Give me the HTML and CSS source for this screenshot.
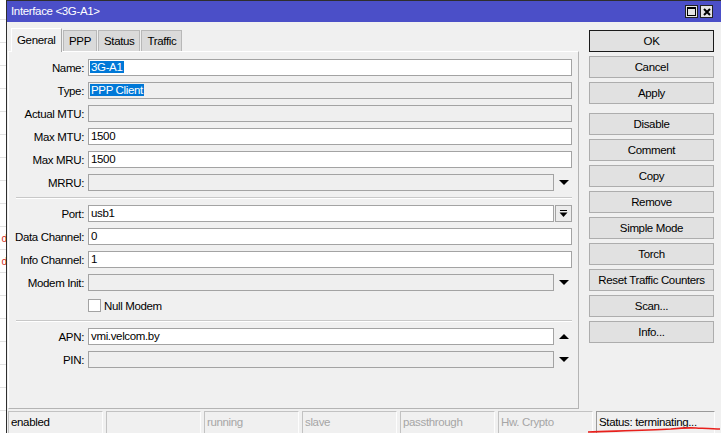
FILE: index.html
```html
<!DOCTYPE html>
<html>
<head>
<meta charset="utf-8">
<link rel="stylesheet" href="styles.css">
</head>
<body>
<div class="screen">
  <div class="behind">
    <div class="brow"></div><div class="brow"></div><div class="brow"></div><div class="brow"></div>
    <div class="brow"></div><div class="brow"></div><div class="brow"></div><div class="brow"></div>
    <div class="brow"></div><div class="brow"></div>
    <div class="brow red"><span>ol</span></div>
    <div class="brow red"><span>ol</span></div>
    <div class="brow"></div><div class="brow"></div><div class="brow"></div><div class="brow"></div>
    <div class="brow"></div><div class="brow"></div><div class="brow"></div><div class="brow"></div>
  </div>
  <div class="window">
    <div class="titlebar">
      <span class="title">Interface &lt;3G-A1&gt;</span>
      <div class="tb-btns">
        <span class="tb-btn"><span class="max-sq"></span></span>
        <span class="tb-btn">
          <svg width="10" height="10" viewBox="0 0 10 10"><path d="M2 2 L8 8 M8 2 L2 8" stroke="#000" stroke-width="2"/></svg>
        </span>
      </div>
    </div>
    <div class="body">
      <div class="main">
        <div class="tabs">
          <span class="tab active">General</span>
          <span class="tab">PPP</span>
          <span class="tab">Status</span>
          <span class="tab">Traffic</span>
        </div>
        <div class="panel">
          <div class="row"><label>Name:</label><div class="field"><span class="sel">3G-A1</span></div></div>
          <div class="row"><label>Type:</label><div class="field ro"><span class="sel">PPP Client</span></div></div>
          <div class="row"><label>Actual MTU:</label><div class="field ro"></div></div>
          <div class="row"><label>Max MTU:</label><div class="field">1500</div></div>
          <div class="row"><label>Max MRU:</label><div class="field">1500</div></div>
          <div class="row"><label>MRRU:</label><div class="field ro"></div><span class="arrow"><span class="tri-down"></span></span></div>
          <div class="sep"></div>
          <div class="row"><label>Port:</label><div class="field">usb1</div><span class="dd-btn">
            <svg width="9" height="9" viewBox="0 0 9 9"><rect x="1" y="1" width="7" height="1" fill="#000"/><path d="M0.5 3.5 H8.5 L4.5 8 Z" fill="#000"/></svg></span></div>
          <div class="row"><label>Data Channel:</label><div class="field">0</div></div>
          <div class="row"><label>Info Channel:</label><div class="field">1</div></div>
          <div class="row"><label>Modem Init:</label><div class="field ro"></div><span class="arrow"><span class="tri-down"></span></span></div>
          <div class="row check"><span class="checkbox"></span><span>Null Modem</span></div>
          <div class="sep"></div>
          <div class="row"><label>APN:</label><div class="field">vmi.velcom.by</div><span class="arrow"><span class="tri-up"></span></span></div>
          <div class="row"><label>PIN:</label><div class="field ro"></div><span class="arrow"><span class="tri-down"></span></span></div>
        </div>
      </div>
      <div class="actions">
        <button class="btn default">OK</button>
        <button class="btn">Cancel</button>
        <button class="btn">Apply</button>
        <button class="btn gap">Disable</button>
        <button class="btn">Comment</button>
        <button class="btn">Copy</button>
        <button class="btn">Remove</button>
        <button class="btn">Simple Mode</button>
        <button class="btn">Torch</button>
        <button class="btn">Reset Traffic Counters</button>
        <button class="btn">Scan...</button>
        <button class="btn">Info...</button>
      </div>
    </div>
    <div class="statusbar">
      <span class="seg">enabled</span>
      <span class="seg"></span>
      <span class="seg dim">running</span>
      <span class="seg dim">slave</span>
      <span class="seg dim">passthrough</span>
      <span class="seg dim">Hw. Crypto</span>
      <span class="seg last">Status: terminating...</span>
    </div>
  </div>
  <svg class="annotation" width="140" height="12" viewBox="0 0 140 12">
    <path d="M2 11 C30 10 60 9.5 85 8 C95 7 100 6.5 110 7 C120 7.5 128 8 134 8" stroke="#e8201c" stroke-width="1.6" fill="none"/>
  </svg>
</div>
</body>
</html>
```

FILE: styles.css
```css
* { box-sizing: border-box; }
html, body { margin: 0; padding: 0; }
body {
  width: 721px;
  height: 433px;
  overflow: hidden;
  background: #fff;
  font-family: "Liberation Sans", Arial, sans-serif;
  font-size: 11.5px;
  letter-spacing: -0.35px;
  color: #000;
}
.screen {
  position: relative;
  display: flex;
  width: 721px;
  height: 433px;
}
.behind {
  width: 6px;
  flex: none;
  overflow: hidden;
  margin-top: -3px;
}
.brow {
  height: 23px;
  border-bottom: 1px solid #e2e2e2;
  display: flex;
  justify-content: flex-end;
  align-items: center;
  white-space: nowrap;
  color: #d22a1e;
  font-size: 10px;
  letter-spacing: -1.6px;
}
.window {
  flex: 1;
  display: flex;
  flex-direction: column;
  border-left: 1px solid #2e2e2e;
  border-top: 1px solid #2e2e2e;
  background: #f0f0f0;
}
.titlebar {
  height: 21px;
  background: #4b4fc8;
  display: flex;
  align-items: center;
  justify-content: space-between;
  padding-left: 4px;
  padding-right: 8px;
  color: #fff;
  flex: none;
}
.title { line-height: 21px; }
.tb-btns { display: flex; gap: 2px; }
.tb-btn {
  width: 13px;
  height: 13px;
  background: #e4e4e4;
  border: 1px solid #222;
  display: flex;
  align-items: center;
  justify-content: center;
}
.max-sq {
  width: 9px;
  height: 9px;
  border: 1px solid #000;
  border-top-width: 2px;
}
.body {
  flex: 1;
  display: flex;
  min-height: 0;
}
.main {
  width: 572px;
  flex: none;
  display: flex;
  flex-direction: column;
}
.tabs {
  display: flex;
  align-items: flex-end;
  padding-left: 4px;
  margin-top: 6px;
  height: 23px;
}
.tab {
  height: 21px;
  line-height: 20px;
  padding: 0 5px;
  background: #dadada;
  border: 1px solid #b8b8b8;
  border-bottom: none;
  margin-right: 1px;
}
.tab.active {
  height: 24px;
  margin-bottom: -1px;
  background: #f0f0f0;
  border-color: #ffffff #a8a8a8 #f0f0f0 #ffffff;
  padding: 0 5px;
  line-height: 22px;
  position: relative;
  z-index: 1;
  width: 51px;
}
.panel {
  margin-left: 1px;
  width: 571px;
  height: 358px;
  border: 1px solid #b4b4b4;
  border-top-color: #ffffff;
  border-left-color: #ffffff;
  padding: 7px 6px 0 0;
  display: flex;
  flex-direction: column;
  gap: 6px;
}
.row {
  display: flex;
  align-items: center;
  height: 17px;
  flex: none;
}
.row label {
  width: 75px;
  flex: none;
  text-align: right;
  margin-right: 4px;
  white-space: nowrap;
}
.field {
  flex: 1;
  height: 17px;
  background: #fff;
  border: 1px solid #a3a3a3;
  padding-left: 2px;
  line-height: 15px;
  white-space: nowrap;
  overflow: hidden;
}
.field.ro { background: #efefef; }
.sel {
  background: #0078d7;
  color: #fff;
  padding: 0 1px;
  margin-left: -1px;
}
.arrow {
  width: 18px;
  flex: none;
  height: 17px;
  display: flex;
  align-items: center;
  justify-content: center;
  padding-left: 2px;
}
.tri-down, .tri-up {
  width: 0;
  height: 0;
  border-left: 5px solid transparent;
  border-right: 5px solid transparent;
}
.tri-down { border-top: 5px solid #000; }
.tri-up { border-bottom: 5px solid #000; }
.dd-btn {
  width: 17px;
  height: 17px;
  flex: none;
  margin-left: 1px;
  border: 1px solid #a3a3a3;
  background: #ececec;
  display: flex;
  align-items: center;
  justify-content: center;
}
.sep {
  height: 2px;
  margin-left: 7px;
  border-top: 1px solid #c8c8c8;
  border-bottom: 1px solid #ffffff;
  flex: none;
}
.row.check { padding-left: 79px; }
.checkbox {
  width: 13px;
  height: 13px;
  background: #fff;
  border: 1px solid #a3a3a3;
  margin-right: 3px;
  flex: none;
}
.actions {
  margin-left: 10px;
  width: 125px;
  padding-top: 8px;
  display: flex;
  flex-direction: column;
  gap: 4px;
}
.btn {
  height: 22px;
  flex: none;
  font: inherit;
  letter-spacing: inherit;
  color: #000;
  background: #e1e1e1;
  border: 1px solid #adadad;
  padding: 0;
  white-space: nowrap;
}
.btn.default { border: 1px solid #1a1a1a; outline: none; }
.btn.gap { margin-top: 5px; }
.statusbar {
  height: 22px;
  flex: none;
  display: flex;
  gap: 3px;
  padding-left: 1px;
  overflow: hidden;
}
.seg {
  width: 95px;
  height: 24px;
  flex: none;
  border: 1px solid #c2c2c2;
  border-right-color: #fdfdfd;
  padding: 2px 0 0 2px;
  line-height: 17px;
  white-space: nowrap;
}
.seg.dim { color: #a6a6a6; }
.seg.last { width: 119px; border-color: #9a9a9a #fdfdfd #fdfdfd #9a9a9a; }
.annotation {
  position: absolute;
  left: 586px;
  top: 421px;
}
```
